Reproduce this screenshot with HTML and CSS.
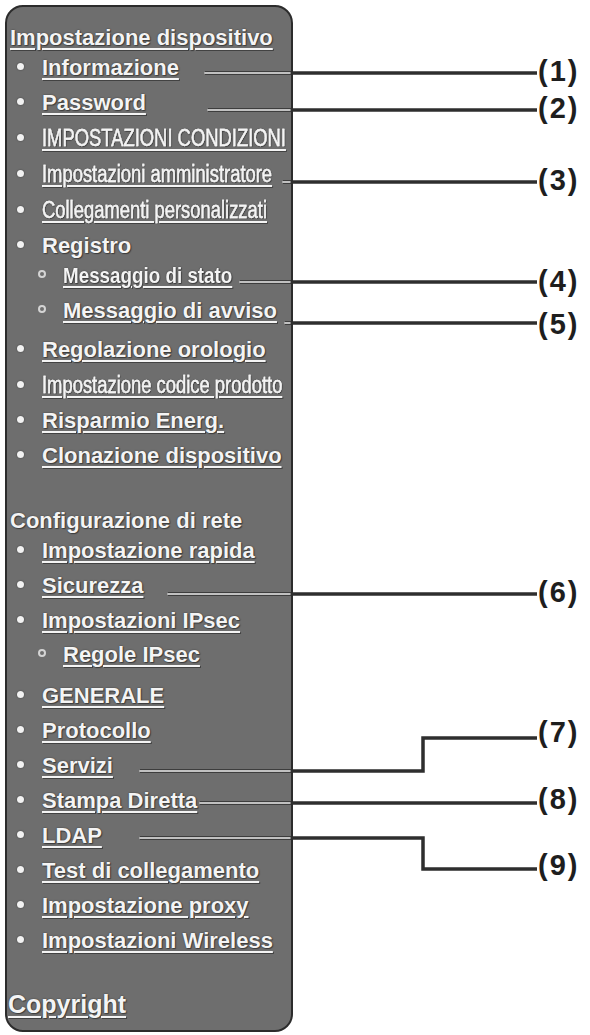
FILE: index.html
```html
<!DOCTYPE html>
<html lang="it">
<head>
<meta charset="utf-8">
<title>Impostazione dispositivo</title>
<link rel="stylesheet" href="styles.css">
</head>
<body>
<div class="page">
  <nav class="panel">
    <section class="group">
      <a class="group-title link" href="#">Impostazione dispositivo</a>
      <ul class="menu">
        <li><a class="link" href="#">Informazione</a></li>
        <li><a class="link" href="#">Password</a></li>
        <li class="narrow"><a class="link" href="#">IMPOSTAZIONI CONDIZIONI</a></li>
        <li class="narrow"><a class="link" href="#">Impostazioni amministratore</a></li>
        <li class="narrow"><a class="link" href="#">Collegamenti personalizzati</a></li>
        <li class="has-sub"><span class="label-plain">Registro</span>
          <ul class="sub">
            <li class="narrow-bold"><a class="link" href="#">Messaggio di stato</a></li>
            <li><a class="link" href="#">Messaggio di avviso</a></li>
          </ul>
        </li>
        <li><a class="link" href="#">Regolazione orologio</a></li>
        <li class="narrow"><a class="link" href="#">Impostazione codice prodotto</a></li>
        <li><a class="link" href="#">Risparmio Energ.</a></li>
        <li><a class="link" href="#">Clonazione dispositivo</a></li>
      </ul>
    </section>
    <section class="group group-next">
      <span class="group-title">Configurazione di rete</span>
      <ul class="menu">
        <li><a class="link" href="#">Impostazione rapida</a></li>
        <li><a class="link" href="#">Sicurezza</a></li>
        <li class="has-sub"><a class="link" href="#">Impostazioni IPsec</a>
          <ul class="sub sub-loose">
            <li><a class="link" href="#">Regole IPsec</a></li>
          </ul>
        </li>
        <li><a class="link" href="#">GENERALE</a></li>
        <li><a class="link" href="#">Protocollo</a></li>
        <li><a class="link" href="#">Servizi</a></li>
        <li><a class="link" href="#">Stampa Diretta</a></li>
        <li><a class="link" href="#">LDAP</a></li>
        <li><a class="link" href="#">Test di collegamento</a></li>
        <li><a class="link" href="#">Impostazione proxy</a></li>
        <li><a class="link" href="#">Impostazioni Wireless</a></li>
      </ul>
    </section>
    <a class="copyright link" href="#">Copyright</a>
  </nav>

  <svg class="callouts" width="590" height="1035" viewBox="0 0 590 1035">
    <g class="lead-dark">
      <path d="M205 68 H537"/>
      <path d="M208 105 H537"/>
      <path d="M283 177 H537"/>
      <path d="M240 277 H537"/>
      <path d="M285 318 H537"/>
      <path d="M168 589 H537"/>
      <path d="M140 766 H423 V733 H537"/>
      <path d="M200 798 H537"/>
      <path d="M140 833 H423 V864 H537"/>
    </g>
    <g class="lead-light">
      <path d="M205 68 H290"/>
      <path d="M208 105 H290"/>
      <path d="M283 177 H290"/>
      <path d="M240 277 H290"/>
      <path d="M285 318 H290"/>
      <path d="M168 589 H290"/>
      <path d="M140 766 H290"/>
      <path d="M200 798 H290"/>
      <path d="M140 833 H290"/>
    </g>
    <g class="tags">
      <text x="538" y="76">(1)</text>
      <text x="538" y="113">(2)</text>
      <text x="538" y="185">(3)</text>
      <text x="538" y="286">(4)</text>
      <text x="538" y="329">(5)</text>
      <text x="538" y="597">(6)</text>
      <text x="538" y="737">(7)</text>
      <text x="538" y="804">(8)</text>
      <text x="538" y="870">(9)</text>
    </g>
  </svg>
</div>
</body>
</html>
```

FILE: styles.css
```css
html, body {
  margin: 0;
  padding: 0;
  background: #ffffff;
}

body {
  width: 590px;
  height: 1035px;
  overflow: hidden;
  font-family: "Liberation Sans", Arial, sans-serif;
}

.page {
  position: relative;
  width: 590px;
  height: 1035px;
}

.panel {
  box-sizing: border-box;
  margin: 5px 0 0 5px;
  width: 288px;
  height: 1027px;
  padding: 18px 0 13px 0;
  border: 2px solid #2c2c2c;
  border-radius: 18px;
  background: #6e6e6e;
  display: flex;
  flex-direction: column;
  color: #f4f4f4;
  text-shadow: 0 0 1.5px rgba(20, 20, 20, 0.7), 1px 1px 1px rgba(0, 0, 0, 0.4);
}

.link {
  color: #f4f4f4;
  text-decoration: underline;
  text-decoration-thickness: 2px;
  text-underline-offset: 3px;
}

.group-title {
  display: block;
  padding-left: 3px;
  font-size: 22px;
  line-height: 25px;
  font-weight: 700;
  color: #f4f4f4;
  align-self: flex-start;
}

.group-next {
  margin-top: 35px;
}

.menu,
.sub {
  list-style: none;
  margin: 0;
  padding: 0 0 0 35px;
}

.menu li {
  padding: 5px 0;
  font-size: 22px;
  line-height: 25px;
  font-weight: 700;
  white-space: nowrap;
}

.menu li.has-sub {
  padding-bottom: 0;
}

.menu li::before {
  content: "";
  display: inline-block;
  width: 7px;
  height: 7px;
  border-radius: 50%;
  background: #f2f2f2;
  box-shadow: 0 0 1.5px rgba(0, 0, 0, 0.6);
  margin-left: -25.5px;
  margin-right: 18.5px;
  vertical-align: 5px;
}

.label-plain {
  color: #f4f4f4;
}

.menu li.narrow {
  padding: 5.5px 0;
  font-weight: 400;
}

.menu li.narrow > .link,
.menu li.narrow-bold > .link {
  display: inline-block;
  transform-origin: 0 50%;
}

.menu li.narrow > .link {
  font-size: 23px;
  -webkit-text-stroke: 0.35px #f4f4f4;
  transform: scaleX(0.8);
}

.menu li.narrow-bold > .link {
  transform: scaleX(0.855);
}

.sub {
  padding-left: 21px;
  margin: 0 0 4px 0;
}

.sub.sub-loose {
  margin: 4px 0 6px 0;
}

.menu .sub li::before {
  box-sizing: border-box;
  width: 8px;
  height: 8px;
  background: transparent;
  border: 2px solid #d4d4d4;
  box-shadow: none;
  margin-left: -25px;
  margin-right: 17px;
  vertical-align: 5px;
}

.copyright {
  margin-top: auto;
  padding-left: 1px;
  font-size: 25px;
  line-height: 25px;
  font-weight: 700;
  align-self: flex-start;
}

.callouts {
  position: absolute;
  left: 0;
  top: 0;
  pointer-events: none;
}

.lead-dark path {
  fill: none;
  stroke: #2e2e2e;
  stroke-width: 3.5;
  stroke-linejoin: miter;
}

.lead-light path {
  fill: none;
  stroke: #f2f2f2;
  stroke-width: 1.6;
  stroke-linecap: round;
}

.tags text {
  font-family: "Liberation Sans", Arial, sans-serif;
  font-size: 29px;
  font-weight: 700;
  letter-spacing: 2px;
  fill: #1e1e1e;
}
```
